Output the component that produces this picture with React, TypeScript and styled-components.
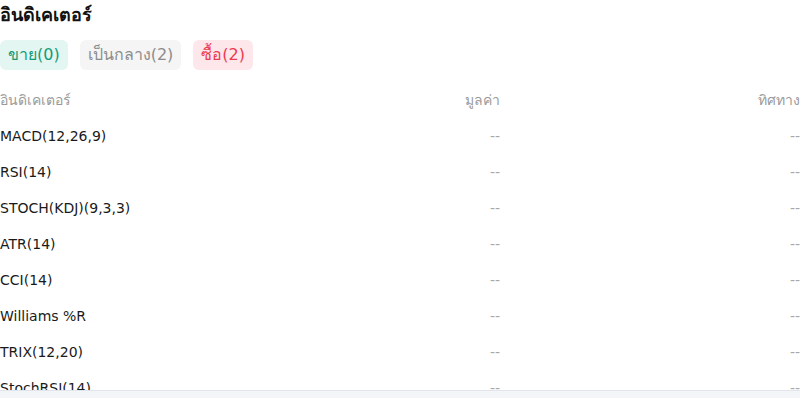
import styled, { createGlobalStyle } from 'styled-components'

const GlobalStyle = createGlobalStyle`
  html, body {
    margin: 0;
    padding: 0;
    background: #fff;
    font-family: 'DejaVu Sans', 'Noto Sans', sans-serif;
  }
`

type Tone = 'sell' | 'neutral' | 'buy'

const tones: { [key in Tone]: { bg: string; fg: string } } = {
  sell: { bg: '#e3f6f1', fg: '#149b77' },
  neutral: { bg: '#f5f5f5', fg: '#8c8c8c' },
  buy: { bg: '#fde7ea', fg: '#ec3a4f' },
}

const indicators = [
  'MACD(12,26,9)',
  'RSI(14)',
  'STOCH(KDJ)(9,3,3)',
  'ATR(14)',
  'CCI(14)',
  'Williams %R',
  'TRIX(12,20)',
  'StochRSI(14)',
]

export default function App() {
  return (
    <>
      <GlobalStyle />
      <Page>
        <Title>อินดิเคเตอร์</Title>
        <Chips>
          <Chip $tone="sell">ขาย(0)</Chip>
          <Chip $tone="neutral">เป็นกลาง(2)</Chip>
          <Chip $tone="buy">ซื้อ(2)</Chip>
        </Chips>
        <Table>
          <HeadRow>
            <Cell>อินดิเคเตอร์</Cell>
            <Cell $right>มูลค่า</Cell>
            <Cell $right>ทิศทาง</Cell>
          </HeadRow>
          {indicators.map((name) => (
            <Row key={name}>
              <Cell>{name}</Cell>
              <Empty>--</Empty>
              <Empty>--</Empty>
            </Row>
          ))}
        </Table>
      </Page>
      <BottomBar />
    </>
  )
}

const Page = styled.div`
  display: flex;
  flex-direction: column;
  height: 398px;
  overflow: hidden;
`

const Title = styled.div`
  height: 30px;
  line-height: 30px;
  font-size: 18px;
  font-weight: bold;
  color: #111;
`

const Chips = styled.div`
  display: flex;
  gap: 12px;
  margin-top: 10px;
`

const Chip = styled.div<{ $tone: Tone }>`
  height: 30px;
  line-height: 30px;
  padding: 0 8px;
  border-radius: 6px;
  font-size: 16px;
  background: ${(p) => tones[p.$tone].bg};
  color: ${(p) => tones[p.$tone].fg};
`

const Table = styled.div`
  display: flex;
  flex-direction: column;
  margin-top: 12px;
`

const Row = styled.div`
  display: grid;
  grid-template-columns: 3fr 2fr 3fr;
  height: 36px;
  align-items: center;
  font-size: 14px;
  color: #1a1a1a;
`

const HeadRow = styled(Row)`
  color: #9a9a9a;
`

const Cell = styled.div<{ $right?: boolean }>`
  text-align: ${(p) => (p.$right ? 'right' : 'left')};
  white-space: nowrap;
`

const Empty = styled.div`
  text-align: right;
  color: #a8a8a8;
`

const BottomBar = styled.div`
  position: fixed;
  left: 0;
  right: 0;
  bottom: 0;
  height: 7px;
  background: #f3f5f9;
  border-top: 1px solid #e1e4eb;
`
